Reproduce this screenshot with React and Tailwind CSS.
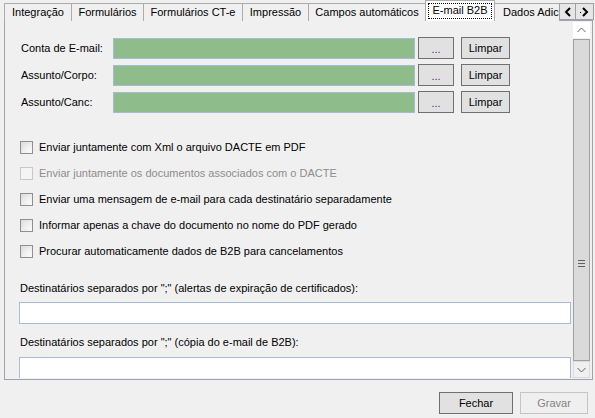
import React from "react";

const Tab = ({ children, w, first }) => (
  <div
    className={`h-[18px] shrink-0 flex items-center justify-center border-t border-r border-[#acacac] bg-[#f0f0f0] whitespace-nowrap ${first ? "border-l" : ""}`}
    style={{ width: w }}
  >
    {children}
  </div>
);

const Btn = ({ children, className = "" }) => (
  <div
    className={`h-[22px] flex items-center justify-center border border-[#707070] bg-[#e1e1e1] ${className}`}
  >
    {children}
  </div>
);

const Check = ({ children, disabled }) => (
  <div className="h-[26px] flex items-center pl-[15px]">
    <div
      className={`w-[13px] h-[13px] border ${disabled ? "border-[#c8c8c8] bg-[#f4f4f4]" : "border-[#8e8f8f] bg-gradient-to-br from-[#dcdcdc] to-[#fbfbfb]"} p-[2px]`}
    >
      <div className={`w-full h-full ${disabled ? "bg-[#f4f4f4]" : "bg-gradient-to-br from-[#e4e4e4] to-[#fafafa]"}`} />
    </div>
    <span className={`ml-[6px] ${disabled ? "text-[#8d8d8d]" : "text-black"}`}>{children}</span>
  </div>
);

const EmailRow = ({ label }) => (
  <div className="flex items-center h-[22px]">
    <div className="w-[92px] shrink-0">{label}</div>
    <div className="w-[302px] h-[21px] bg-[#8fbc8b] border border-[#a6bcd6]" />
    <Btn className="ml-[3px] w-[36px] text-[#5a1a8a]">
      <span className="relative top-[1px]">...</span>
    </Btn>
    <Btn className="ml-[7px] w-[49px]">Limpar</Btn>
  </div>
);

export default function App() {
  return (
    <div
      className="w-[595px] h-[418px] bg-[#f0f0f0] overflow-hidden text-[11px] leading-[13px] text-black"
      style={{ fontFamily: '"Liberation Sans", Arial, sans-serif' }}
    >
      {/* tab strip */}
      <div className="flex h-[21px] relative z-10">
        <div className="flex items-end w-[555px] ml-[4px] overflow-hidden">
          <Tab w={68} first>Integração</Tab>
          <Tab w={72}>Formulários</Tab>
          <Tab w={99}>Formulários CT-e</Tab>
          <Tab w={66}>Impressão</Tab>
          <Tab w={117}>Campos automáticos</Tab>
          <div className="h-[21px] w-[70px] shrink-0 -ml-[1px] bg-white border-t border-l border-r border-[#acacac] flex items-center justify-center pb-[1px]">
            <div className="border border-dotted border-black px-[3px] h-[16px] flex items-center whitespace-nowrap">
              E-mail B2B
            </div>
          </div>
          <Tab w={110}>
            <span className="pl-[8px] w-full">Dados Adicionais</span>
          </Tab>
        </div>
        <div className="flex items-end pb-[1px]">
          <div className="w-[17px] h-[17px] border border-[#a0a0a0] bg-[#e6e6e6] flex items-center justify-center">
            <svg width="8" height="10" viewBox="0 0 8 10">
              <path d="M6 1 L2 5 L6 9" stroke="#000" strokeWidth="2" fill="none" />
            </svg>
          </div>
          <div className="w-[18px] h-[17px] border border-l-0 border-[#a0a0a0] bg-[#e6e6e6] flex items-center justify-center">
            <svg width="10" height="10" viewBox="0 0 10 10">
              <rect x="0" y="5" width="1" height="1" fill="#000" />
              <path d="M3 1 L7 5 L3 9" stroke="#000" strokeWidth="2" fill="none" />
            </svg>
          </div>
        </div>
      </div>

      {/* panel */}
      <div className="-mt-[1px] ml-[4px] w-[589px] h-[360px] border border-[#a0a4aa] flex pt-[1px] pb-[1px] pr-[2px]">
        <div className="flex-1 overflow-hidden">
          <div className="pl-[16px] pt-[15px] flex flex-col gap-[5px]">
            <EmailRow label="Conta de E-mail:" />
            <EmailRow label="Assunto/Corpo:" />
            <EmailRow label="Assunto/Canc:" />
          </div>
          <div className="mt-[21px] flex flex-col">
            <Check>Enviar juntamente com Xml o arquivo DACTE em PDF</Check>
            <Check disabled>Enviar juntamente os documentos associados com o DACTE</Check>
            <Check>Enviar uma mensagem de e-mail para cada destinatário separadamente</Check>
            <Check>Informar apenas a chave do documento no nome do PDF gerado</Check>
            <Check>Procurar automaticamente dados de B2B para cancelamentos</Check>
          </div>
          <div className="pl-[14px] pr-[1px]">
            <div className="mt-[17px] pl-[1px] h-[14px] leading-[14px]">
              Destinatários separados por ";" (alertas de expiração de certificados):
            </div>
            <div className="mt-[7px] h-[22px] bg-white border border-[#a6bcd6]" />
            <div className="mt-[11px] pl-[1px] h-[14px] leading-[14px]">
              Destinatários separados por ";" (cópia do e-mail de B2B):
            </div>
            <div className="mt-[8px] h-[22px] bg-white border border-[#a6bcd6]" />
          </div>
        </div>
        {/* scrollbar */}
        <div className="w-[17px] ml-[1px] flex flex-col">
          <div className="h-[16px] bg-white flex items-center justify-center">
            <svg width="9" height="6" viewBox="0 0 9 6">
              <path d="M0.5 5 L4.5 1 L8.5 5" stroke="#606060" strokeWidth="1" fill="none" />
            </svg>
          </div>
          <div className="mt-[1px] h-[322px] bg-[#dadada] border border-[#a0a0a0] flex flex-col items-center pt-[220px] gap-[2px]">
            <div className="w-[7px] h-[1px] bg-[#606060]" />
            <div className="w-[7px] h-[1px] bg-[#606060]" />
            <div className="w-[7px] h-[1px] bg-[#606060]" />
          </div>
          <div className="flex-1 bg-[#f0f0f0] border border-[#dadada] flex items-center justify-center">
            <svg width="9" height="6" viewBox="0 0 9 6">
              <path d="M0.5 1 L4.5 5 L8.5 1" stroke="#606060" strokeWidth="1" fill="none" />
            </svg>
          </div>
        </div>
      </div>

      {/* bottom buttons */}
      <div className="flex justify-end pr-[7px] mt-[12px] gap-[7px]">
        <Btn className="w-[74px]">Fechar</Btn>
        <div className="h-[22px] w-[68px] flex items-center justify-center border border-[#c4c4c4] bg-[#efefef] text-[#838383]">
          Gravar
        </div>
      </div>
    </div>
  );
}
